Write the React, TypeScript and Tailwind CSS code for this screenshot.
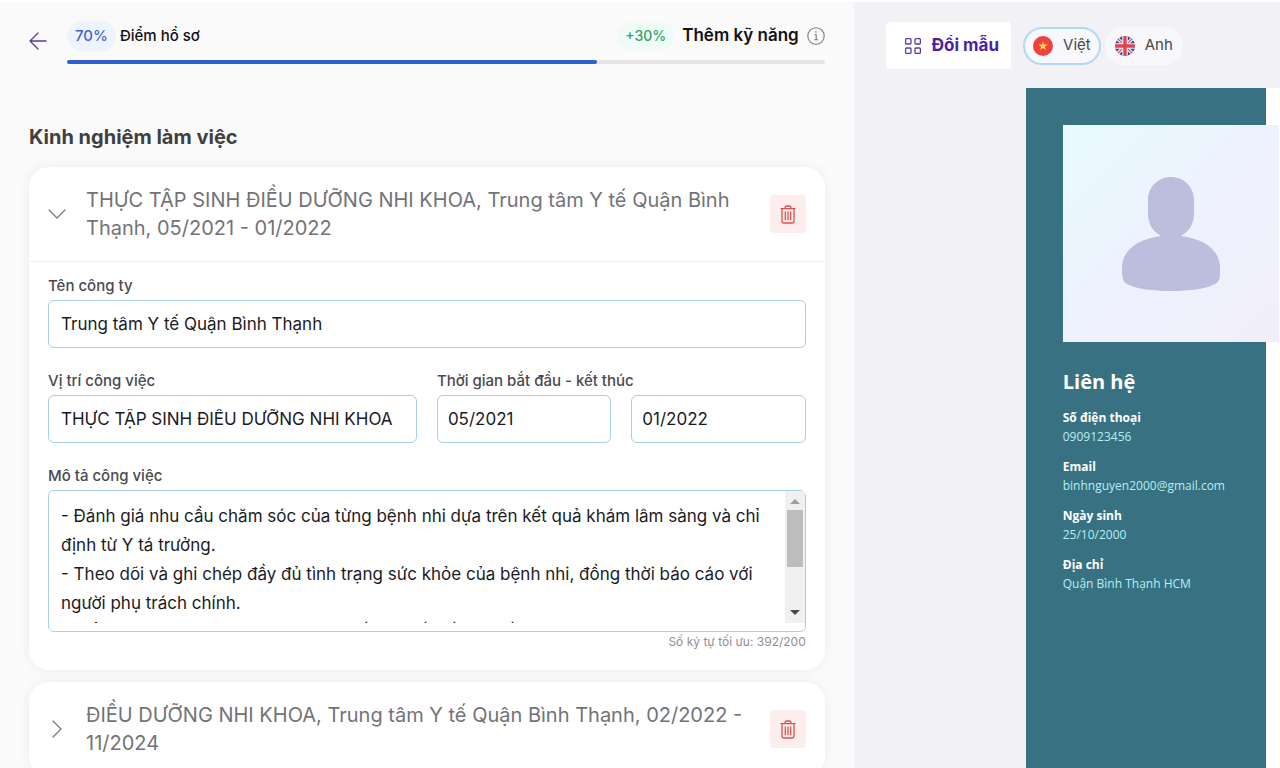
import { useState, type ReactNode } from 'react';

const FIELD =
    'w-full min-w-0 rounded-md border border-[#a9cfe6] bg-white text-[17px] text-[#1b1b1f] outline-none h-12';

const DESCRIPTION = `- Đánh giá nhu cầu chăm sóc của từng bệnh nhi dựa trên kết quả khám lâm sàng và chỉ định từ Y tá trưởng.
- Theo dõi và ghi chép đầy đủ tình trạng sức khỏe của bệnh nhi, đồng thời báo cáo với người phụ trách chính.
- Kiểm tra, bảo quản tài liệu, trang thiết bị y tế, số hóa hồ sơ bệnh nhân, nhập thông tin hàng ngày.`;

const CONTACTS = [
    { label: 'Số điện thoại', value: '0909123456' },
    { label: 'Email', value: 'binhnguyen2000@gmail.com' },
    { label: 'Ngày sinh', value: '25/10/2000' },
    { label: 'Địa chỉ', value: 'Quận Bình Thạnh HCM' },
];

const LANGUAGES = [
    { id: 'vi', name: 'Việt', Flag: VietnamFlag },
    { id: 'en', name: 'Anh', Flag: UkFlag },
];

function VietnamFlag() {
    return (
        <svg viewBox="0 0 20 20" className="size-5" aria-hidden="true">
            <circle cx="10" cy="10" r="10" fill="#f0413f" />
            <path
                d="M10 5.2l1.15 3.35h3.5l-2.8 2.1 1.05 3.4L10 12l-2.9 2.05 1.05-3.4-2.8-2.1h3.5z"
                fill="#ffda44"
            />
        </svg>
    );
}

function UkFlag() {
    return (
        <svg viewBox="0 0 20 20" className="size-5" aria-hidden="true">
            <clipPath id="uk-round">
                <circle cx="10" cy="10" r="10" />
            </clipPath>
            <g clipPath="url(#uk-round)">
                <path d="M0 0h20v20H0z" fill="#3c4494" />
                <path d="M0 0l20 20M20 0L0 20" stroke="#f4f0f6" strokeWidth="3.4" />
                <path d="M0 0l20 20M20 0L0 20" stroke="#dc4654" strokeWidth="1.2" />
                <path d="M10 0v20M0 10h20" stroke="#f4f0f6" strokeWidth="5.6" />
                <path d="M10 0v20M0 10h20" stroke="#dc4654" strokeWidth="3.4" />
            </g>
        </svg>
    );
}

function TrashIcon() {
    return (
        <svg
            viewBox="0 0 16 19"
            className="h-[19px] w-4"
            fill="none"
            stroke="#d9534f"
            strokeWidth="1.3"
            strokeLinecap="round"
            strokeLinejoin="round"
            aria-hidden="true"
        >
            <path d="M1 3.6h14M5 3.4c0-1.6.7-2.4 1.8-2.4h2.4c1.1 0 1.8.8 1.8 2.4" />
            <path d="M2 3.8v12.2c0 1.2.8 2 2 2h8c1.2 0 2-.8 2-2V3.8" />
            <path d="M5.3 7v7.8M8 7v7.8M10.7 7v7.8" />
        </svg>
    );
}

function Chevron({ open }: { open: boolean }) {
    return (
        <svg
            viewBox="0 0 18 18"
            className="size-[18px]"
            fill="none"
            stroke="#77777c"
            strokeWidth="1.2"
            strokeLinecap="round"
            strokeLinejoin="round"
            aria-hidden="true"
        >
            {open ? <path d="M1 5l8 8 8-8" /> : <path d="M5 1l8 8-8 8" />}
        </svg>
    );
}

function ScoreHeader() {
    return (
        <header className="flex gap-5">
            <button type="button" aria-label="Quay lại" className="mt-7 h-5 w-[18px] self-start">
                <svg
                    viewBox="0 0 18 20"
                    className="h-5 w-[18px]"
                    fill="none"
                    stroke="#5b3aa0"
                    strokeWidth="1.3"
                    strokeLinecap="round"
                    strokeLinejoin="round"
                >
                    <path d="M17 11H1M9 3L1 11l8 8" />
                </svg>
            </button>
            <div className="flex-1">
                <div className="mt-[18px] flex h-8 items-center justify-between">
                    <div className="flex items-center gap-1 text-[15px] text-[#111114]">
                        <span className="rounded-full bg-[#edf4fe] px-2 py-1 font-medium text-[#3f66d0]">
                            70%
                        </span>
                        <span className="font-medium">Điểm hồ sơ</span>
                    </div>
                    <div className="flex items-center gap-2">
                        <span className="rounded-full bg-[#effcf5] px-2 py-1 text-sm font-medium text-[#35a06f]">
                            +30%
                        </span>
                        <span className="text-[17px] font-semibold text-[#111114]">
                            Thêm kỹ năng
                        </span>
                        <svg
                            viewBox="0 0 18 18"
                            className="size-[18px]"
                            fill="none"
                            stroke="#7b7b80"
                            strokeWidth="1.1"
                            aria-hidden="true"
                        >
                            <circle cx="9" cy="9" r="8.2" />
                            <path d="M7.4 7.8h1.8v4.8M7.2 12.8h3.8" />
                            <path d="M8.3 5h1.2" strokeWidth="1.5" />
                        </svg>
                    </div>
                </div>
                <div className="mt-2 h-1 rounded-full bg-[#e5e5e5]">
                    <div className="h-1 w-[70%] rounded-full bg-[#2f5fd0]" />
                </div>
            </div>
        </header>
    );
}

interface ExperienceCardProps {
    title: string;
    open: boolean;
    onToggle: () => void;
    children?: ReactNode;
}

function ExperienceCard({ title, open, onToggle, children }: ExperienceCardProps) {
    return (
        <section className="rounded-[20px] bg-white shadow-[0_0_12px_rgba(0,0,0,0.06)]">
            <div className="flex items-center px-[19px] py-[19px]">
                <button
                    type="button"
                    aria-expanded={open}
                    onClick={onToggle}
                    className="flex flex-1 items-center gap-5 text-left text-xl leading-7 text-[#737377]"
                >
                    <span className="shrink-0">
                        <Chevron open={open} />
                    </span>
                    <span className="max-w-[664px]">{title}</span>
                </button>
                <button
                    type="button"
                    aria-label="Xóa"
                    className="flex h-[38px] w-9 shrink-0 items-center justify-center rounded bg-[#fdeeee]"
                >
                    <TrashIcon />
                </button>
            </div>
            {open && children}
        </section>
    );
}

function Label({ htmlFor, children }: { htmlFor: string; children: ReactNode }) {
    return (
        <label
            htmlFor={htmlFor}
            className="block text-[15px] leading-5 font-medium text-[#4a4a4f]"
        >
            {children}
        </label>
    );
}

function DescriptionField() {
    return (
        <div>
            <Label htmlFor="description">Mô tả công việc</Label>
            <div className="mt-1 flex h-[142px] rounded-md border border-[#a9cfe6] bg-white pb-2">
                <textarea
                    id="description"
                    defaultValue={DESCRIPTION}
                    className="flex-1 resize-none pt-[11px] pr-2 pl-3 text-[17px] leading-[29px] text-[#1b1b1f] outline-none [scrollbar-width:none]"
                />
                {/* Scrollbar */}
                <div
                    className="flex w-5 flex-col items-center justify-between bg-[#f0f0f0] pb-2"
                    aria-hidden="true"
                >
                    <div className="flex flex-col items-center gap-1.5 pt-2">
                        <svg viewBox="0 0 10 5" className="h-[5px] w-2.5" fill="#a0a0a0">
                            <path d="M0 5l5-5 5 5z" />
                        </svg>
                        <div className="h-[57px] w-4 bg-[#bdbdbd]" />
                    </div>
                    <svg viewBox="0 0 10 5" className="h-[5px] w-2.5" fill="#4b4b4b">
                        <path d="M0 0l5 5 5-5z" />
                    </svg>
                </div>
            </div>
            <p className="text-right text-xs leading-5 text-[#8f8f94]">Số ký tự tối ưu: 392/200</p>
        </div>
    );
}

function ExperienceForm() {
    return (
        <form className="flex flex-col gap-[23px] border-t border-[#f1f1f2] px-[19px] pt-[14px] pb-[18px]">
            <div>
                <Label htmlFor="company">Tên công ty</Label>
                <input
                    id="company"
                    defaultValue="Trung tâm Y tế Quận Bình Thạnh"
                    className={`${FIELD} mt-1 px-3`}
                />
            </div>
            <div className="grid grid-cols-2 gap-5">
                <div>
                    <Label htmlFor="position">Vị trí công việc</Label>
                    <input
                        id="position"
                        defaultValue="THỰC TẬP SINH ĐIỀU DƯỠNG NHI KHOA"
                        className={`${FIELD} mt-1 px-3`}
                    />
                </div>
                <div>
                    <Label htmlFor="start">Thời gian bắt đầu - kết thúc</Label>
                    <div className="mt-1 grid grid-cols-2 gap-5">
                        <input id="start" defaultValue="05/2021" className={`${FIELD} px-2.5`} />
                        <input
                            aria-label="Kết thúc"
                            defaultValue="01/2022"
                            className={`${FIELD} px-2.5`}
                        />
                    </div>
                </div>
            </div>
            <DescriptionField />
        </form>
    );
}

function PreviewToolbar() {
    const [language, setLanguage] = useState('vi');

    return (
        <div className="flex items-center gap-3 pt-5 pl-8">
            <button
                type="button"
                className="flex h-[47px] items-center gap-2.5 rounded bg-white pr-3 pl-[18px] text-[17px] font-bold text-[#4b1fa0]"
            >
                <svg
                    viewBox="0 0 18 18"
                    className="size-[18px]"
                    fill="none"
                    stroke="#5b3aa0"
                    strokeWidth="1.3"
                    aria-hidden="true"
                >
                    <rect x="1.6" y="1.6" width="5.4" height="5.4" rx="1" />
                    <rect x="11" y="1.6" width="5.4" height="5.4" rx="1" />
                    <rect x="1.6" y="11" width="5.4" height="5.4" rx="1" />
                    <rect x="11" y="11" width="5.4" height="5.4" rx="1" />
                </svg>
                Đổi mẫu
            </button>
            <div className="flex gap-1">
                {LANGUAGES.map(({ id, name, Flag }) => (
                    <button
                        key={id}
                        type="button"
                        aria-pressed={language === id}
                        onClick={() => setLanguage(id)}
                        className={`flex h-[38px] items-center gap-2.5 rounded-full border-2 bg-[#f8f8fc] px-2 text-[15px] text-[#47474c] ${
                            language === id ? 'border-[#b3d9f2]' : 'border-transparent'
                        }`}
                    >
                        <Flag />
                        {name}
                    </button>
                ))}
            </div>
        </div>
    );
}

function ResumePreview() {
    return (
        <div className="mt-[19px] ml-[172px] flex flex-1 bg-white font-['Open_Sans','Noto_Sans',sans-serif]">
            <aside className="w-60 shrink-0 bg-[#387282] pt-[37px] pl-[37px]">
                <div className="flex h-[217px] w-[216px] items-center justify-center bg-linear-to-br from-[#e8fbff] via-[#eef2fe] to-[#f2eefb]">
                    <svg viewBox="0 0 98 114" className="h-[114px] w-[98px]" fill="#bbbedd">
                        <path d="M49 0c13 0 23 10 23 23v14c0 11-6 18-13 22 22 3 39 13 39 32v6c0 5-1 8-5 10-9 5-26 7-44 7s-35-2-44-7c-4-2-4-5-5-10v-6c0-19 17-29 39-32-7-4-13-11-13-22V23C26 10 36 0 49 0z" />
                    </svg>
                </div>
                <h2 className="mt-[26px] text-xl leading-7 font-bold text-white">Liên hệ</h2>
                <dl className="mt-3 flex flex-col gap-[11px] text-xs leading-[19px]">
                    {CONTACTS.map((contact) => (
                        <div key={contact.label}>
                            <dt className="font-bold text-white">{contact.label}</dt>
                            <dd className="text-[#b5eef2]">{contact.value}</dd>
                        </div>
                    ))}
                </dl>
            </aside>
        </div>
    );
}

export default function App() {
    const [openCards, setOpenCards] = useState([true, false]);

    const toggle = (index: number) => {
        setOpenCards(openCards.map((open, i) => (i === index ? !open : open)));
    };

    return (
        <div className="flex h-screen overflow-hidden border-t-2 border-white bg-[#fafafa] font-['Inter','Noto_Sans',sans-serif]">
            <main className="w-[66.7%] shrink-0 px-[29px]">
                <ScoreHeader />
                <h1 className="mt-[59px] text-xl leading-7 font-bold text-[#3f3f44]">
                    Kinh nghiệm làm việc
                </h1>
                <div className="mt-4 flex flex-col gap-3">
                    <ExperienceCard
                        title="THỰC TẬP SINH ĐIỀU DƯỠNG NHI KHOA, Trung tâm Y tế Quận Bình Thạnh, 05/2021 - 01/2022"
                        open={openCards[0]}
                        onToggle={() => toggle(0)}
                    >
                        <ExperienceForm />
                    </ExperienceCard>
                    <ExperienceCard
                        title="ĐIỀU DƯỠNG NHI KHOA, Trung tâm Y tế Quận Bình Thạnh, 02/2022 - 11/2024"
                        open={openCards[1]}
                        onToggle={() => toggle(1)}
                    />
                </div>
            </main>
            <div className="flex flex-1 flex-col overflow-hidden bg-[#f1f1f6]">
                <PreviewToolbar />
                <ResumePreview />
            </div>
        </div>
    );
}
